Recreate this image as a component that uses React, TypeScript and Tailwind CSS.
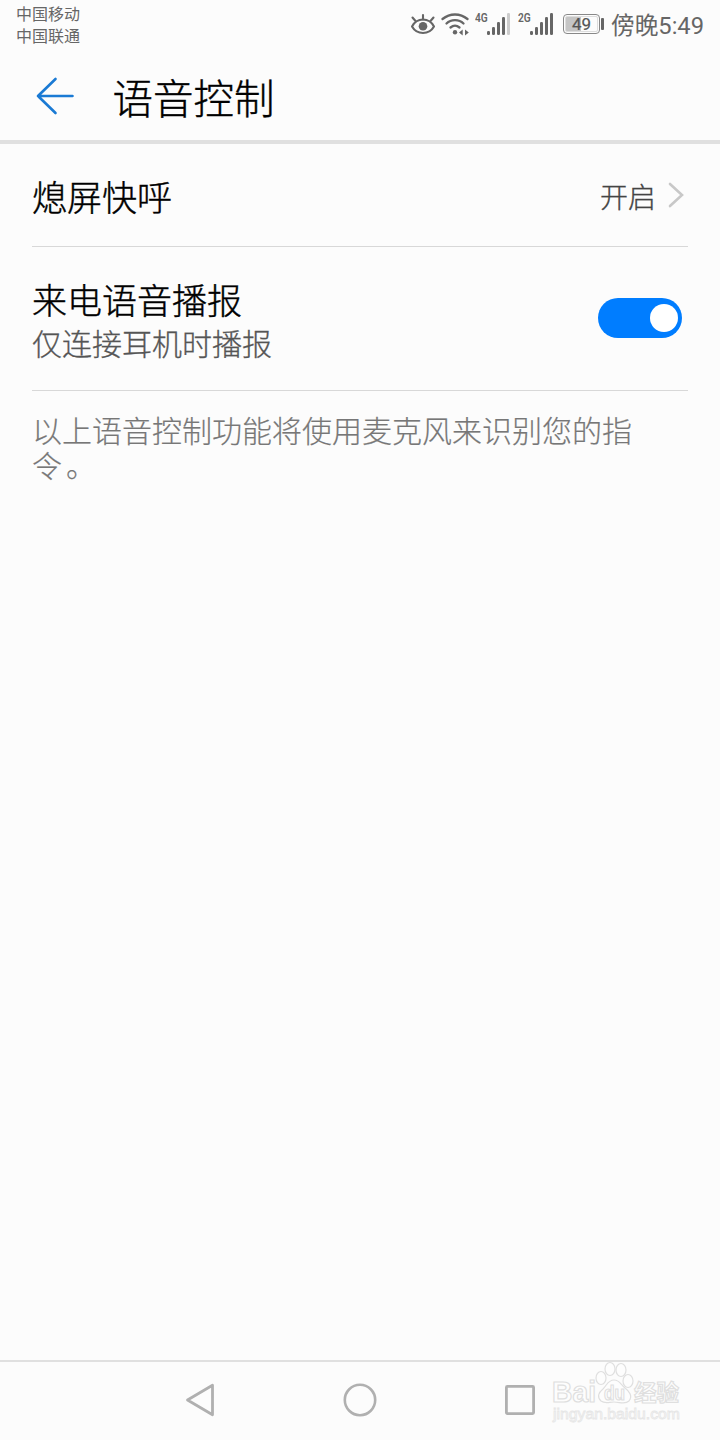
import React from 'react';

const font = "font-['Roboto','Noto_Sans_CJK_SC',sans-serif]";

function EyeIcon() {
  return (
    <svg width="26" height="24" viewBox="0 0 26 24" fill="none" stroke="#666" strokeWidth="2.100" strokeLinecap="round">
      <path d="M2 14.500C7 5.200 19 5.200 24 14.500C19 23.200 7 23.200 2 14.500Z" strokeLinejoin="round" />
      <path d="M13 7.500V3M5.500 9L2.500 5.500M20.500 9L23.500 5.500" />
      <circle cx="13" cy="14.200" r="4.300" fill="#666" stroke="none" />
    </svg>
  );
}

function WifiIcon() {
  return (
    <svg width="28" height="24" viewBox="0 0 28 24" fill="none" stroke="#666" strokeWidth="2.300" strokeLinecap="round">
      <path d="M1.500 7C9 1 19 1 26.500 7" />
      <path d="M5.500 11.500C10 7 18 7 22.500 11.500" />
      <path d="M9.500 15.500C12.500 13 15.500 13 18.500 15.500" />
      <circle cx="14" cy="20.300" r="2.200" fill="#666" stroke="none" />
      <path d="M18 20.500L21.700 17.500V23.500ZM27.800 20.500L24 17.500V23.500Z" fill="#666" stroke="none" />
    </svg>
  );
}

function Signal({ label, weak }: { label: string; weak?: boolean }) {
  return (
    <div className="flex h-6 w-9 items-start">
      <span className="w-3 origin-left scale-x-[0.85] font-['Roboto',sans-serif] text-[12px] leading-[12px] font-semibold text-[#666]">{label}</span>
      <svg width="24" height="24" viewBox="0 0 24 24" fill="#666">
        <rect x="0" y="19" width="3" height="4" rx="1.200" />
        <rect x="5" y="15" width="3" height="8" rx="1.200" />
        <rect x="10" y="10" width="3" height="13" rx="1.200" />
        <rect x="15" y="5" width="3" height="18" rx="1.200" />
        <rect x="20" y="1" width="3" height="22" rx="1.200" fill={weak ? '#ccc' : '#666'} />
      </svg>
    </div>
  );
}

function Battery() {
  return (
    <div className="flex items-center gap-[1px]">
      <div className="flex h-5 w-[37px] rounded-[4px] border border-[#888] p-[1px]">
        <div className="flex w-full items-center justify-center rounded-[2px] border border-[#ddd] bg-[linear-gradient(90deg,#c5c5c5_49%,transparent_49%)] text-[17px] leading-none text-[#555] [-webkit-text-stroke:0.2px_#555]">
          49
        </div>
      </div>
      <div className="h-3 w-[3px] rounded-[1px] bg-[#666]" />
    </div>
  );
}

function Watermark() {
  return (
    <div className="absolute top-[1360px] left-[548px]">
      <svg width="136" height="64" viewBox="0 0 136 64" fill="#fdfdfd" stroke="#dfdfdf" strokeWidth="1.200">
        <text x="4" y="42" fontSize="29" fontWeight="bold" textLength="44" lengthAdjust="spacingAndGlyphs" fontFamily="Liberation Sans, sans-serif">Bai</text>
        <ellipse cx="53" cy="18" rx="5" ry="6.500" />
        <ellipse cx="62" cy="9" rx="5" ry="6.500" />
        <ellipse cx="73" cy="10" rx="5" ry="6.500" />
        <ellipse cx="80" cy="21" rx="5" ry="6.500" />
        <path d="M66 20C60 20 59 25 55 29C50 33 49 37 53 41C57 44 61 42 66 42C72 42 77 45 81 41C85 36 81 31 77 28C73 25 72 20 66 20Z" />
        <text x="56" y="40" fontSize="20" fontWeight="bold" textLength="21" lengthAdjust="spacingAndGlyphs" fontFamily="Liberation Sans, sans-serif">du</text>
        <text x="86" y="41" fontSize="23" fontWeight="bold" textLength="45" lengthAdjust="spacingAndGlyphs" fontFamily="Noto Sans CJK SC, sans-serif">经验</text>
        <text x="5" y="59" fontSize="15" stroke="#e6e6e6" strokeWidth="0.800" textLength="127" lengthAdjust="spacingAndGlyphs" fontFamily="Liberation Sans, sans-serif">jingyan.baidu.com</text>
      </svg>
    </div>
  );
}

export default function App() {
  return (
    <div className={`relative flex h-[1440px] w-[720px] flex-col bg-[#fcfcfc] text-black ${font}`}>
      <div className="flex h-12 shrink-0 justify-between">
        <div className="pt-1 pl-4 text-[16px] leading-[22px] text-[#666]">
          <div>中国移动</div>
          <div>中国联通</div>
        </div>
        <div className="flex h-12 items-center pr-4">
          <EyeIcon />
          <div className="ml-[5px]"><WifiIcon /></div>
          <div className="ml-[6px]"><Signal label="4G" weak /></div>
          <div className="ml-[7px]"><Signal label="2G" /></div>
          <div className="ml-[9px]"><Battery /></div>
          <span className="ml-[7px] pt-[3px] text-[23.700px] leading-8 text-[#666]">傍晚5:49</span>
        </div>
      </div>

      <header className="flex h-24 shrink-0 items-center border-b-4 border-[#e0e0e0] pl-9">
        <svg width="38" height="38" viewBox="0 0 38 38" fill="none" stroke="#1a7ad4" strokeWidth="2.600" strokeLinecap="round" strokeLinejoin="round" className="mt-1">
          <path d="M19.500 2L2 19L19.500 36M2 19H36.500" />
        </svg>
        <h1 className="ml-[38.500px] pt-3 text-[40.500px] leading-[56px] font-light [-webkit-text-stroke:0.4px]">语音控制</h1>
      </header>

      <main className="flex grow flex-col px-8">
        <div className="flex h-[103px] items-center justify-between border-b border-[#d8d8d8]">
          <span className="pt-[10px] text-[35px] leading-[48px] font-light [-webkit-text-stroke:0.4px]">熄屏快呼</span>
          <div className="flex items-center">
            <span className="pt-[7px] text-[28px] leading-10 font-light text-[#444] [-webkit-text-stroke:0.3px]">开启</span>
            <svg width="16" height="28" viewBox="0 0 16 28" fill="none" stroke="#c8c8c8" strokeWidth="2.600" strokeLinecap="round" className="mr-1 ml-3">
              <path d="M2 3L14 14L2 25" />
            </svg>
          </div>
        </div>

        <div className="flex h-36 items-start justify-between border-b border-[#d8d8d8]">
          <div className="pt-[33px]">
            <div className="text-[35px] leading-[46px] font-light [-webkit-text-stroke:0.4px]">来电语音播报</div>
            <div className="text-[30px] leading-[38px] font-light text-[#555] [-webkit-text-stroke:0.3px]">仅连接耳机时播报</div>
          </div>
          <button role="switch" aria-checked="true" aria-label="来电语音播报" className="mt-[51px] mr-1.5 flex h-10 w-[84px] items-center justify-end rounded-full bg-[#007dff] pr-1">
            <span className="size-7 rounded-full bg-white" />
          </button>
        </div>

        <p className="mt-[23px] w-[610px] text-[30px] leading-[35px] font-light text-[#777] [-webkit-text-stroke:0.2px]">
          <span className="block">以上语音控制功能将使用麦克风来识别您的指</span>
          <span className="block tracking-[4px]">令。</span>
        </p>
      </main>

      <nav className="flex h-20 shrink-0 items-center justify-center gap-32 border-t-2 border-[#e0e0e0] pb-0.5">
        <svg width="32" height="34" viewBox="0 0 32 34" fill="none" stroke="#b0b0b0" strokeWidth="2.800" strokeLinejoin="round">
          <path d="M3.500 17L28.500 2.200V31.800Z" />
        </svg>
        <svg width="34" height="34" viewBox="0 0 34 34" fill="none" stroke="#b0b0b0" strokeWidth="2.600" className="-mx-px">
          <circle cx="17" cy="17" r="15.200" />
        </svg>
        <svg width="32" height="34" viewBox="0 0 32 34" fill="none" stroke="#b0b0b0" strokeWidth="2.800" strokeLinejoin="round">
          <rect x="2.400" y="3.400" width="27.200" height="27.200" rx="1" />
        </svg>
      </nav>
      <Watermark />
    </div>
  );
}
